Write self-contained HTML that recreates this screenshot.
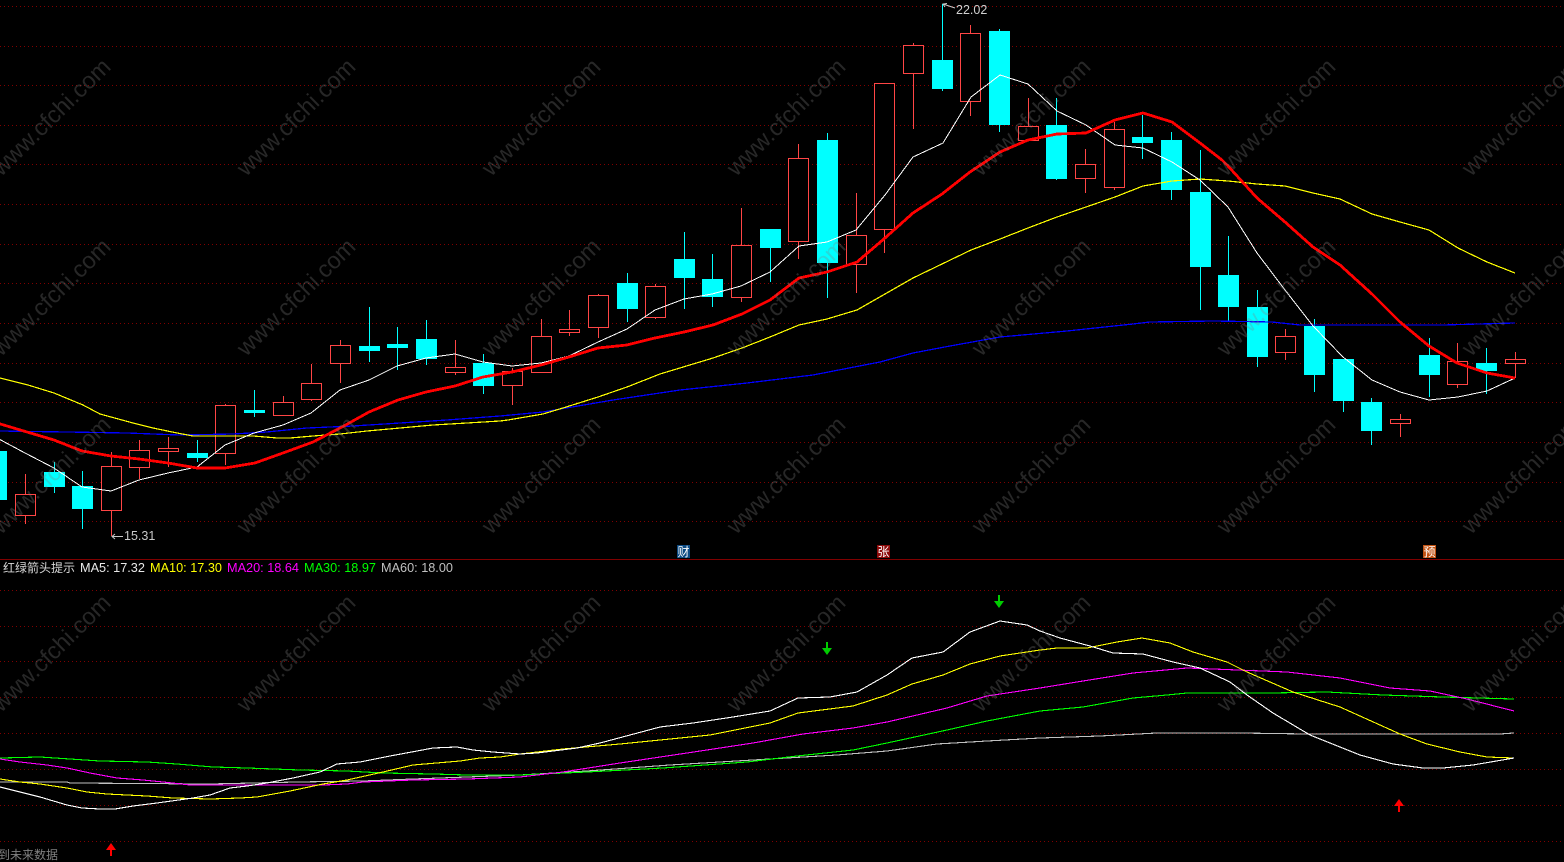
<!DOCTYPE html>
<html lang="zh"><head><meta charset="utf-8"><title>K线图</title>
<style>
html,body{margin:0;padding:0;background:#000;width:1564px;height:862px;overflow:hidden}
svg{position:absolute;left:0;top:0;display:block}
text{font-family:"Liberation Sans","Noto Sans CJK SC",sans-serif}
</style></head><body>
<svg width="1564" height="862" viewBox="0 0 1564 862" xmlns="http://www.w3.org/2000/svg">
<rect width="1564" height="862" fill="#000"/>
<!-- grid -->
<g stroke="#800000" stroke-width="1" stroke-dasharray="1 3" shape-rendering="crispEdges" fill="none">
<path d="M0 6.5H1564M0 46.5H1564M0 85.5H1564M0 125.5H1564M0 164.5H1564M0 204.5H1564M0 244.5H1564M0 283.5H1564M0 323.5H1564M0 363.5H1564M0 402.5H1564M0 442.5H1564M0 482.5H1564M0 521.5H1564"/>
<path d="M0 590.5H1564M0 626.5H1564M0 661.5H1564M0 697.5H1564M0 733.5H1564M0 769.5H1564M0 805.5H1564M0 841.5H1564"/>
</g>
<path d="M0 559.5H1564" stroke="#800000" shape-rendering="crispEdges"/>
<!-- cyan wicks -->
<path shape-rendering="crispEdges" stroke="#00ffff" fill="none" d="M54.5 462V472M54.5 487V493M82.5 471V486M82.5 509V529M197.5 440V453M197.5 458V462M254.5 390V410M254.5 413V417M369.5 307V346M369.5 351V362M397.5 327V344M397.5 348V370M426.5 320V339M426.5 359V365M483.5 354V363M483.5 386V394M627.5 273V283M627.5 309V322M684.5 232V259M684.5 278V309M712.5 254V279M712.5 297V307M770.5 248V282M827.5 133V140M827.5 263V298M942.5 4V60M942.5 89V91M999.5 29V31M999.5 125V132M1056.5 98V125M1056.5 179V180M1142.5 115V137M1142.5 143V159M1171.5 132V140M1171.5 190V200M1200.5 150V192M1200.5 267V310M1228.5 236V275M1228.5 307V321M1257.5 290V307M1257.5 357V367M1314.5 319V326M1314.5 375V392M1343.5 401V412M1371.5 398V402M1371.5 431V445M1429.5 338V355M1429.5 375V397M1486.5 348V363M1486.5 371V394"/>
<!-- cyan bodies -->
<path shape-rendering="crispEdges" fill="#00ffff" d="M-14 451h21v49h-21zM44 472h21v15h-21zM72 486h21v23h-21zM187 453h21v5h-21zM244 410h21v3h-21zM359 346h21v5h-21zM387 344h21v4h-21zM416 339h21v20h-21zM473 363h21v23h-21zM617 283h21v26h-21zM674 259h21v19h-21zM702 279h21v18h-21zM760 229h21v19h-21zM817 140h21v123h-21zM932 60h21v29h-21zM989 31h21v94h-21zM1046 125h21v54h-21zM1132 137h21v6h-21zM1161 140h21v50h-21zM1190 192h21v75h-21zM1218 275h21v32h-21zM1247 307h21v50h-21zM1304 326h21v49h-21zM1333 359h21v42h-21zM1361 402h21v29h-21zM1419 355h21v20h-21zM1476 363h21v8h-21z"/>
<!-- red wicks -->
<path shape-rendering="crispEdges" stroke="#ff4545" fill="none" d="M25.5 474V494M25.5 515V524M111.5 452V466M111.5 510V536M139.5 440V450M139.5 467V479M168.5 437V448M168.5 451V467M225.5 404V405M225.5 453V465M283.5 396V402M311.5 364V383M311.5 399V401M340.5 340V345M340.5 363V383M455.5 340V367M455.5 372V375M512.5 368V371M512.5 385V405M541.5 319V336M569.5 310V329M569.5 332V336M598.5 294V295M598.5 327V338M655.5 284V286M655.5 317V319M741.5 208V245M741.5 297V302M798.5 144V158M798.5 241V259M856.5 193V235M856.5 264V293M884.5 229V253M913.5 43V45M913.5 73V129M970.5 25V33M970.5 101V116M1028.5 98V126M1085.5 149V164M1085.5 178V193M1114.5 122V129M1114.5 187V190M1285.5 329V336M1285.5 352V360M1400.5 414V419M1400.5 423V437M1457.5 343V361M1457.5 384V388M1515.5 352V359M1515.5 363V378"/>
<!-- red bodies -->
<g shape-rendering="crispEdges" stroke="#ff4545" fill="#000">
<rect x="15.5" y="494.5" width="20" height="21"/><rect x="101.5" y="466.5" width="20" height="44"/><rect x="129.5" y="450.5" width="20" height="17"/><rect x="158.5" y="448.5" width="20" height="3"/><rect x="215.5" y="405.5" width="20" height="48"/><rect x="273.5" y="402.5" width="20" height="13"/><rect x="301.5" y="383.5" width="20" height="16"/><rect x="330.5" y="345.5" width="20" height="18"/><rect x="445.5" y="367.5" width="20" height="5"/><rect x="502.5" y="371.5" width="20" height="14"/><rect x="531.5" y="336.5" width="20" height="36"/><rect x="559.5" y="329.5" width="20" height="3"/><rect x="588.5" y="295.5" width="20" height="32"/><rect x="645.5" y="286.5" width="20" height="31"/><rect x="731.5" y="245.5" width="20" height="52"/><rect x="788.5" y="158.5" width="20" height="83"/><rect x="846.5" y="235.5" width="20" height="29"/><rect x="874.5" y="83.5" width="20" height="146"/><rect x="903.5" y="45.5" width="20" height="28"/><rect x="960.5" y="33.5" width="20" height="68"/><rect x="1018.5" y="126.5" width="20" height="14"/><rect x="1075.5" y="164.5" width="20" height="14"/><rect x="1104.5" y="129.5" width="20" height="58"/><rect x="1275.5" y="336.5" width="20" height="16"/><rect x="1390.5" y="419.5" width="20" height="4"/><rect x="1447.5" y="361.5" width="20" height="23"/><rect x="1505.5" y="359.5" width="20" height="4"/>
</g>
<!-- upper MAs -->
<g fill="none" stroke-linejoin="round" shape-rendering="crispEdges">
<polyline stroke="#0000ff" stroke-width="1.25" points="0,431 67,432 127,433 153,434 180,435 233,434 267,432 307,428 353,426 400,423 447,420 500,416 543,412 613,400 680,390 747,383 813,375 880,362 913,353 950,346 1000,337 1067,331 1133,324 1150,322 1213,321 1272,322 1300,325 1443,325 1515,323"/>
<polyline stroke="#ffff00" stroke-width="1.2" points="0,378 28,385 54,393 83,405 100,414 133,423 153,428 177,433 193,436 223,436 253,436 277,438 290,438 313,436 340,434 367,431 400,428 433,425 467,423 500,421 508,420 543,414 563,408 598,397 627,387 660,374 713,358 742,348 770,337 799,325 827,319 857,310 885,294 913,278 942,264 971,250 1000,239 1028,228 1057,217 1086,207 1115,197 1143,186 1172,181 1200,179 1228,181 1257,184 1285,186 1313,193 1340,199 1372,214 1400,222 1429,230 1458,248 1487,262 1515,273"/>
<polyline stroke="#ffffff" stroke-width="1" points="-3,438 25,453 54,468 82,487 111,491 139,480 168,473 197,467 225,445 254,433 283,425 311,413 340,390 369,380 397,366 426,358 455,354 483,362 512,366 541,363 569,356 598,342 627,329 655,310 684,299 712,294 741,286 770,272 799,246 827,242 856,230 885,195 913,157 943,143 971,97 1000,75 1028,84 1057,111 1086,125 1115,145 1143,148 1172,162 1200,180 1228,207 1257,253 1285,290 1313,326 1343,357 1372,380 1400,392 1429,400 1458,397 1487,391 1515,378"/>
<polyline stroke="#ff0000" stroke-width="2.8" points="-3,423 27,432 54,440 82,451 111,456 139,459 168,463 197,468 225,468 255,463 283,453 313,442 342,427 369,412 398,400 426,392 455,386 483,377 512,372 541,365 569,357 598,348 627,345 655,338 684,332 713,325 742,314 770,300 799,278 827,272 857,262 885,238 913,213 942,194 970,172 1000,152 1028,140 1057,134 1086,133 1115,120 1143,113 1172,122 1200,143 1222,160 1228,166 1257,198 1285,222 1313,247 1340,265 1372,294 1400,322 1429,346 1457,363 1487,373 1515,378"/>
</g>
<!-- lower MAs -->
<g fill="none" stroke-width="1.1" shape-rendering="crispEdges">
<polyline stroke="#c0c0c0" points="0,782 67,782 70,783 210,784 297,782 363,781 413,779 467,777 520,775 587,771 670,765 753,760 837,755 887,751 937,744 987,741 1040,738 1100,736 1157,733 1240,733 1307,734 1500,734 1514,733"/>
<polyline stroke="#00ff00" points="0,758 40,757 100,761 147,762 177,764 213,767 247,768 300,770 347,771 383,773 433,774 467,775 520,775 587,772 663,768 747,762 797,756 853,750 887,743 947,730 987,721 1040,711 1083,707 1133,698 1167,695 1187,693 1270,693 1327,692 1383,695 1443,697 1514,699"/>
<polyline stroke="#ff00ff" points="0,759 20,762 47,765 67,768 90,773 117,778 143,780 163,782 190,785 323,785 347,784 363,782 413,780 467,779 520,777 563,772 620,763 687,753 753,743 803,734 853,728 887,722 947,708 987,696 1040,688 1083,681 1133,673 1187,668 1213,669 1287,672 1340,678 1390,688 1430,691 1467,699 1514,711"/>
<polyline stroke="#ffff00" points="0,779 20,782 40,784 67,788 87,792 107,794 127,795 147,796 173,798 210,799 240,798 257,797 290,791 323,784 347,780 383,772 413,765 460,761 480,758 500,757 520,754 563,749 620,744 710,735 770,723 798,713 853,706 887,695 912,684 943,675 970,664 1000,656 1040,650 1057,648 1087,648 1117,642 1142,638 1170,643 1193,652 1227,662 1247,672 1293,692 1340,707 1400,734 1427,744 1460,752 1487,757 1514,758"/>
<polyline stroke="#ffffff" points="0,787 20,792 40,797 67,805 82,808 100,809 115,809 133,806 157,803 193,798 210,795 230,788 247,786 267,783 293,778 320,772 337,764 360,762 390,756 417,751 433,748 457,747 473,750 493,752 520,754 537,753 553,751 577,748 600,743 630,735 660,727 693,723 733,717 770,711 798,698 830,697 857,692 887,675 912,658 943,652 970,632 1000,621 1027,625 1040,631 1060,638 1090,646 1113,653 1143,654 1173,662 1200,668 1230,682 1247,695 1273,713 1310,735 1360,755 1393,764 1423,768 1443,768 1473,765 1514,758"/>
</g>
<!-- arrows -->
<path fill="#00cc00" d="M998 595h2v6h4l-5 7-5-7h4zM826 642h2v6h4l-5 7-5-7h4z"/>
<path fill="#ff0000" d="M111 843l5 7h-4v6h-2v-6h-4zM1399 799l5 7h-4v6h-2v-6h-4z"/>
<!-- price callouts -->
<path fill="none" stroke="#c8c8c8" d="M112 536.5H123M115 534l-3 2.5 3 2.5M943 4l12 4M947 3.5l-4 .5 2 3"/>
<text x="956" y="14" font-size="12.5" fill="#d0d0d0">22.02</text>
<text x="124" y="540" font-size="12.5" fill="#c8c8c8">15.31</text>
<!-- event markers -->
<rect x="677" y="545" width="13" height="13" fill="#0c4a82"/>
<text x="683.5" y="556" font-size="12" fill="#fff" text-anchor="middle">财</text>
<rect x="877" y="545" width="13" height="13" fill="#8c0a0a"/>
<text x="883.5" y="556" font-size="12" fill="#fff" text-anchor="middle">张</text>
<rect x="1423" y="545" width="13" height="13" fill="#c05010"/>
<text x="1429.5" y="556" font-size="12" fill="#fff" text-anchor="middle">预</text>
<!-- legend -->
<g font-size="12.7">
<text x="3" y="572" font-size="12" fill="#d8d8d8">红绿箭头提示</text>
<text x="80" y="572" fill="#e8e8e8">MA5: 17.32</text>
<text x="150" y="572" fill="#ffff00">MA10: 17.30</text>
<text x="227" y="572" fill="#ff00ff">MA20: 18.64</text>
<text x="304" y="572" fill="#00ff00">MA30: 18.97</text>
<text x="381" y="572" fill="#c0c0c0">MA60: 18.00</text>
</g>
<text x="-2" y="859" font-size="12" fill="#808080">到未来数据</text>
<!-- watermark -->
<g font-size="23.5" fill="#808080" fill-opacity="0.3" text-anchor="middle">
<text x="51" y="125" transform="rotate(-44.5 51 117)">www.cfchi.com</text>
<text x="296" y="125" transform="rotate(-44.5 296 117)">www.cfchi.com</text>
<text x="541" y="125" transform="rotate(-44.5 541 117)">www.cfchi.com</text>
<text x="786" y="125" transform="rotate(-44.5 786 117)">www.cfchi.com</text>
<text x="1031" y="125" transform="rotate(-44.5 1031 117)">www.cfchi.com</text>
<text x="1276" y="125" transform="rotate(-44.5 1276 117)">www.cfchi.com</text>
<text x="1521" y="125" transform="rotate(-44.5 1521 117)">www.cfchi.com</text>
<text x="51" y="305" transform="rotate(-44.5 51 297)">www.cfchi.com</text>
<text x="296" y="305" transform="rotate(-44.5 296 297)">www.cfchi.com</text>
<text x="541" y="305" transform="rotate(-44.5 541 297)">www.cfchi.com</text>
<text x="786" y="305" transform="rotate(-44.5 786 297)">www.cfchi.com</text>
<text x="1031" y="305" transform="rotate(-44.5 1031 297)">www.cfchi.com</text>
<text x="1276" y="305" transform="rotate(-44.5 1276 297)">www.cfchi.com</text>
<text x="1521" y="305" transform="rotate(-44.5 1521 297)">www.cfchi.com</text>
<text x="51" y="483" transform="rotate(-44.5 51 475)">www.cfchi.com</text>
<text x="296" y="483" transform="rotate(-44.5 296 475)">www.cfchi.com</text>
<text x="541" y="483" transform="rotate(-44.5 541 475)">www.cfchi.com</text>
<text x="786" y="483" transform="rotate(-44.5 786 475)">www.cfchi.com</text>
<text x="1031" y="483" transform="rotate(-44.5 1031 475)">www.cfchi.com</text>
<text x="1276" y="483" transform="rotate(-44.5 1276 475)">www.cfchi.com</text>
<text x="1521" y="483" transform="rotate(-44.5 1521 475)">www.cfchi.com</text>
<text x="51" y="661" transform="rotate(-44.5 51 653)">www.cfchi.com</text>
<text x="296" y="661" transform="rotate(-44.5 296 653)">www.cfchi.com</text>
<text x="541" y="661" transform="rotate(-44.5 541 653)">www.cfchi.com</text>
<text x="786" y="661" transform="rotate(-44.5 786 653)">www.cfchi.com</text>
<text x="1031" y="661" transform="rotate(-44.5 1031 653)">www.cfchi.com</text>
<text x="1276" y="661" transform="rotate(-44.5 1276 653)">www.cfchi.com</text>
<text x="1521" y="661" transform="rotate(-44.5 1521 653)">www.cfchi.com</text>
</g>
</svg>
</body></html>
